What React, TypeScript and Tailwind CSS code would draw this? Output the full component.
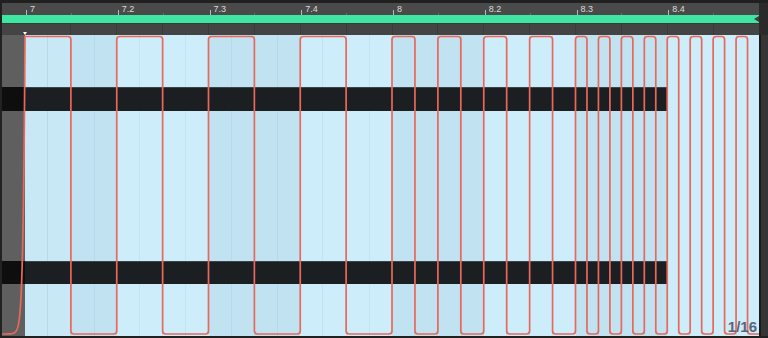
import React from "react";

const X0 = 25;
const U = 734 / 64;
const xt = (t: number) => X0 + t * U;
const TOP = 36.5;
const BOT = 334;

function buildPath(): string {
  const r = 3;
  const pts: string[] = [];
  const k = 0.52;
  const x1 = 2;
  const x2 = 25;
  const den = Math.exp(k * (x2 - x1)) - 1;
  for (let i = 0; i <= 80; i++) {
    const x = x1 + ((x2 - x1) * i) / 80;
    const f = (Math.exp(k * (x - x1)) - 1) / den;
    const y = BOT - f * (BOT - TOP);
    pts.push(`${x.toFixed(2)},${y.toFixed(2)}`);
  }
  let d = "M" + pts.join(" L");
  const trans: number[] = [4, 8, 12, 16, 20, 24, 28, 32, 34, 36, 38, 40, 42, 44, 46, 48];
  for (let t = 49; t <= 63; t++) trans.push(t);
  let high = true;
  for (const t of trans) {
    const X = xt(t);
    if (high) {
      d += ` L${(X - r).toFixed(2)},${TOP} Q${X.toFixed(2)},${TOP} ${X.toFixed(2)},${TOP + r} L${X.toFixed(2)},${BOT - r} Q${X.toFixed(2)},${BOT} ${(X + r).toFixed(2)},${BOT}`;
    } else {
      d += ` L${(X - r).toFixed(2)},${BOT} Q${X.toFixed(2)},${BOT} ${X.toFixed(2)},${BOT - r} L${X.toFixed(2)},${TOP + r} Q${X.toFixed(2)},${TOP} ${(X + r).toFixed(2)},${TOP}`;
    }
    high = !high;
  }
  d += ` L759,${BOT}`;
  return d;
}

const beats = [
  { label: "7", dark: true },
  { label: "7.2", dark: false },
  { label: "7.3", dark: true },
  { label: "7.4", dark: false },
  { label: "8", dark: true },
  { label: "8.2", dark: false },
  { label: "8.3", dark: true },
  { label: "8.4", dark: false },
];

export default function App() {
  const path = buildPath();
  return (
    <div className="relative w-[768px] h-[338px] bg-[#202020] overflow-hidden flex flex-col font-['Liberation_Sans',Arial,sans-serif]">
      <div className="h-[3px] shrink-0" />
      {/* header */}
      <div className="flex h-[32px] shrink-0">
        <div className="w-[2px]" />
        <div className="w-[757px] flex flex-col">
          {/* ruler */}
          <div className="h-[12px] bg-[#4a4a4a] flex">
            <div className="w-[23px]" />
            <div className="flex-1 flex">
              {beats.map((b) => (
                <div key={b.label} className="flex-1 flex items-end">
                  <div className="flex-1 flex items-end">
                    <div className="w-[1px] h-[5px] bg-[#b8b8b8] ml-[1px]" />
                    <span className="ml-[3px] mb-[1px] text-[9px] leading-none text-[#dadada]">{b.label}</span>
                  </div>
                  <div className="flex-1 flex items-end">
                    <div className="w-[1px] h-[2px] bg-[#6a6a6a]" />
                  </div>
                </div>
              ))}
            </div>
          </div>
          {/* green loop bar */}
          <div className="h-[8px] bg-[#3fe6a3] relative">
            <div className="absolute right-0 top-[1px] w-0 h-0 border-y-[3px] border-y-transparent border-r-[5px] border-r-[#3a3a3a]" />
          </div>
          {/* lower strip */}
          <div className="h-[12px] bg-[#444444] flex border-t border-[#3a3a3a]">
            <div className="w-[23px]" />
            <div className="flex-1 flex relative">
              <div className="absolute left-[-2px] bottom-0 w-0 h-0 border-x-[2.5px] border-x-transparent border-t-[3px] border-t-white" />
              {Array.from({ length: 16 }).map((_, i) => (
                <div key={i} className={`flex-1 ${i === 0 ? "" : "border-l border-[#3b3b3b]"}`} />
              ))}
            </div>
          </div>
        </div>
        <div className="flex-1 bg-[#2a2a2a]" />
      </div>
      {/* main */}
      <div className="flex h-[301px] shrink-0">
        <div className="w-[2px] bg-[#222222]" />
        <div className="w-[23px] bg-[#5f5f5f] relative">
          <div className="absolute left-0 right-0 top-[52px] h-[24px] bg-[#0e0e0e]" />
          <div className="absolute left-0 right-0 top-[226px] h-[23px] bg-[#0e0e0e]" />
        </div>
        <div className="w-[734px] flex relative">
          {beats.map((b, bi) => (
            <div key={b.label} className={`flex-1 flex ${b.dark ? "bg-[#c1e2f1]" : "bg-[#cdedfb]"}`}>
              {[0, 1, 2, 3].map((s) => (
                <div
                  key={s}
                  className={`flex-1 ${s === 0 ? "" : b.dark ? "border-l border-[#b8d9e9]" : "border-l border-[#c2e3f2]"} ${bi === 0 && s < 2 ? "bg-[#c8e8f6]" : ""}`}
                />
              ))}
            </div>
          ))}
          <div className="absolute left-0 w-[642px] top-[52px] h-[24px] bg-[#1c1f22] border-t border-[#3b4448]" />
          <div className="absolute left-0 w-[642px] top-[226px] h-[23px] bg-[#1c1f22] border-t border-[#3b4448]" />
        </div>
        <div className="w-[2px] bg-[#1a1a1a]" />
        <div className="flex-1 bg-[#353535]" />
      </div>
      <div className="flex-1" />
      <svg className="absolute inset-0 pointer-events-none" width="768" height="338" viewBox="0 0 768 338">
        <path d={path} fill="none" stroke="#ea675b" strokeWidth="1.7" strokeLinejoin="round" />
      </svg>
      <div className="absolute right-[11px] bottom-[4px] text-[15px] font-bold leading-none text-[#56667b]">1/16</div>
    </div>
  );
}
